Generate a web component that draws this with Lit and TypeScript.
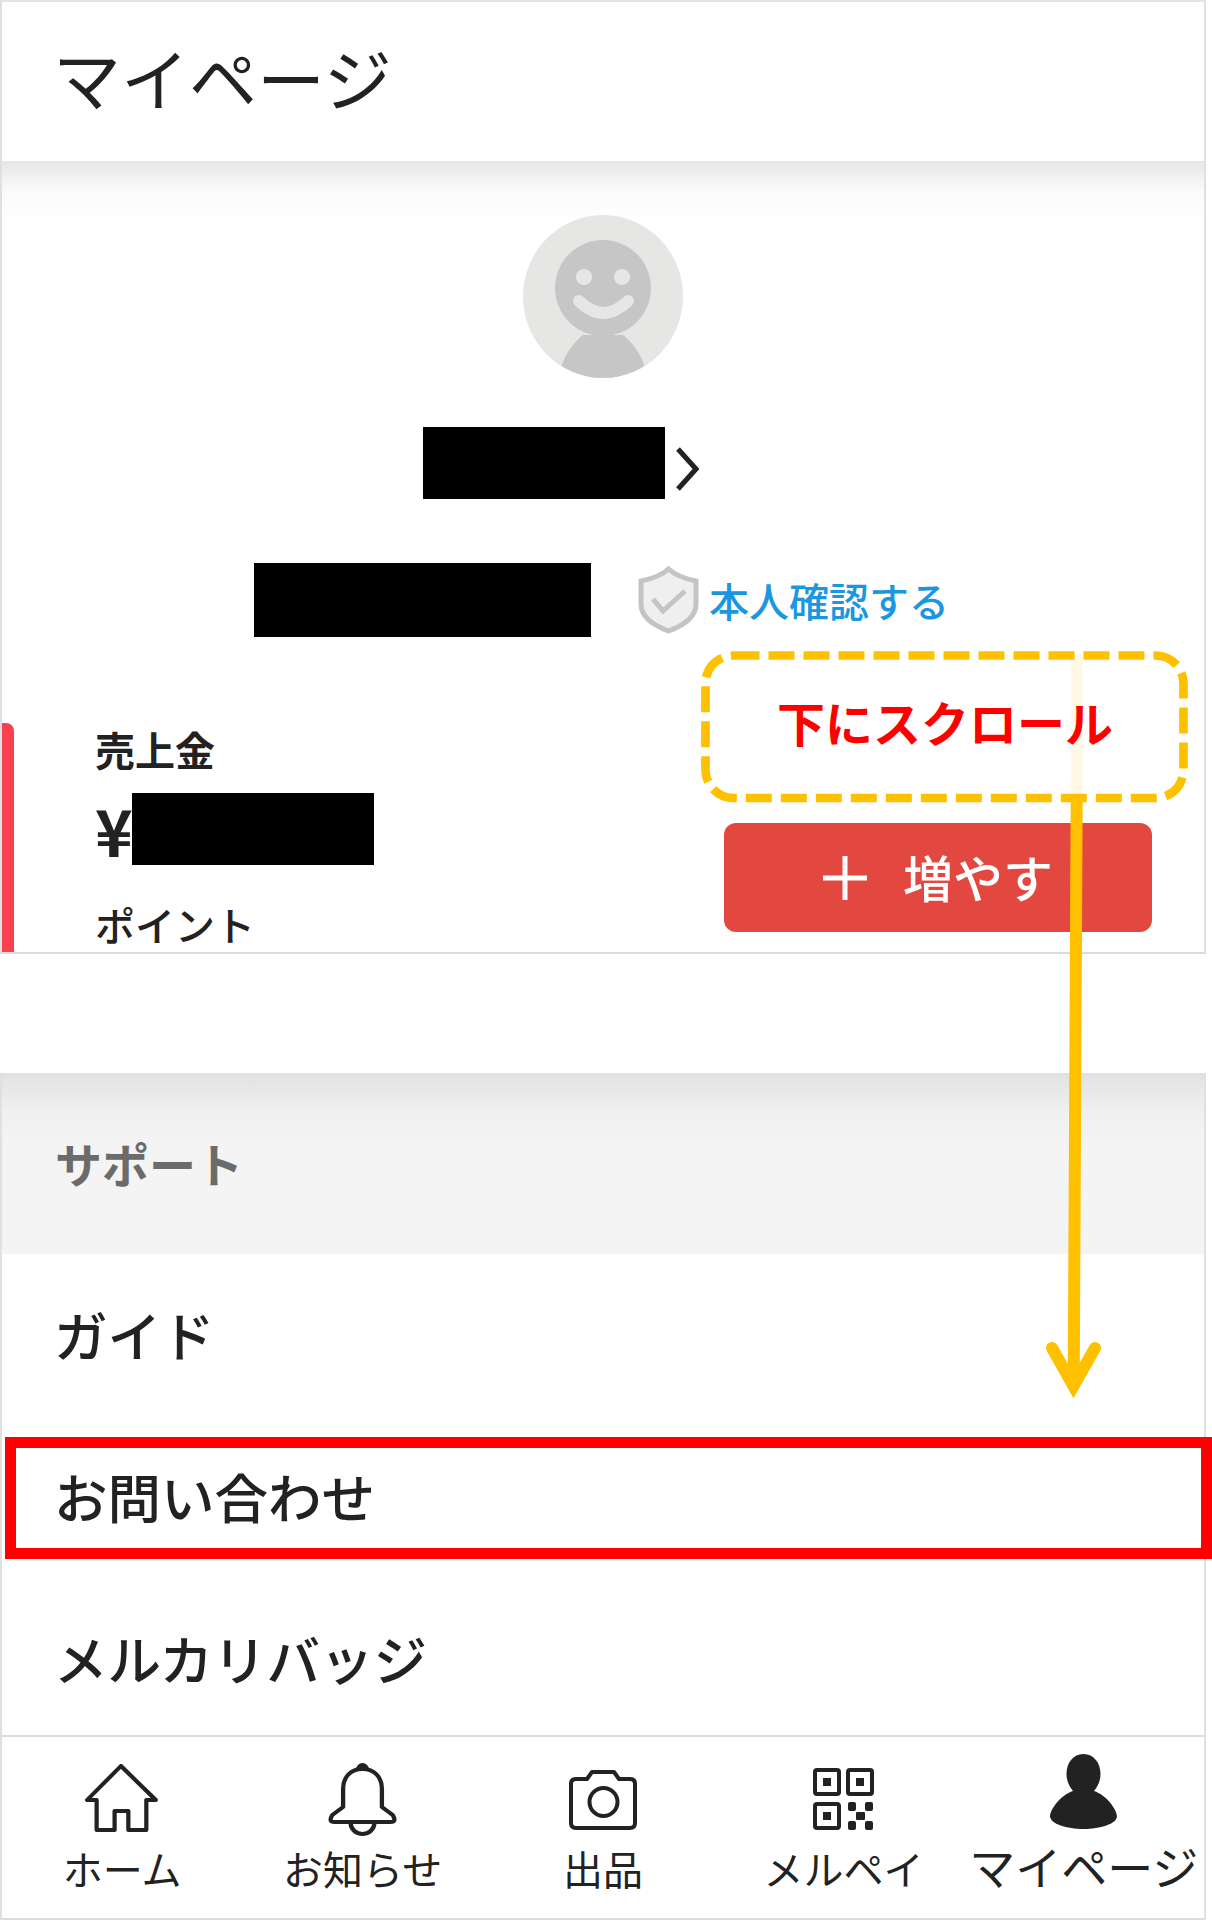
import { LitElement, html, css, svg } from "lit";
import { customElement } from "lit/decorators.js";

const navItems = [
  {
    label: "ホーム",
    icon: html`<svg class="ico" width="74" height="70" viewBox="0 0 70 70" preserveAspectRatio="none">
      <path d="M34 2 L2 36 H11 V66 H28 V47 H41 V66 H58 V36 H67 Z" />
    </svg>`,
  },
  {
    label: "お知らせ",
    icon: html`<svg class="ico" width="69" height="76" viewBox="0 0 64 76" preserveAspectRatio="none">
      <path d="M32 8 C21 8 14 16 14 28 V46 L4 54 Q0 61 6 61 H58 Q64 61 60 54 L50 46 V28 C50 16 43 8 32 8Z" />
      <path d="M21 62 A11 11 0 0 0 43 62" />
      <path class="fill" d="M25 10 Q27 2 32 2 Q37 2 39 10 Z" />
    </svg>`,
  },
  {
    label: "出品",
    icon: html`<svg class="ico" width="68" height="61" viewBox="0 0 68 61">
      <path d="M7 10 H18 L23 3 H45 L50 10 H61 Q66 10 66 15 V54 Q66 59 61 59 H7 Q2 59 2 54 V15 Q2 10 7 10Z" />
      <circle cx="34.5" cy="33" r="14" />
    </svg>`,
  },
  {
    label: "メルペイ",
    icon: html`<svg class="ico" width="61" height="62" viewBox="0 0 61 62">
      <rect x="2" y="2" width="24" height="24" rx="2" />
      <rect x="35" y="2" width="24" height="24" rx="2" />
      <rect x="2" y="36" width="24" height="24" rx="2" />
      <rect class="fill" x="10" y="10" width="8" height="8" />
      <rect class="fill" x="43" y="10" width="8" height="8" />
      <rect class="fill" x="10" y="44" width="8" height="8" />
      <rect class="fill" x="35" y="34" width="8" height="9" rx="2" />
      <rect class="fill" x="52" y="34" width="8" height="9" rx="2" />
      <rect class="fill" x="43" y="44" width="9" height="8" rx="1" />
      <rect class="fill" x="35" y="53" width="8" height="9" rx="2" />
      <rect class="fill" x="52" y="53" width="8" height="9" rx="2" />
    </svg>`,
  },
  {
    label: "マイページ",
    active: true,
    icon: html`<svg class="ico" width="67" height="75" viewBox="0 0 67 75">
      <path class="fill" d="M33.5 0 C44 0 50.5 9 50.5 20 C50.5 28 47 33 44 37 C56 41 66 54 67 62 C67 70 50 75 33.5 75 C17 75 0 70 0 62 C1 54 11 41 23 37 C20 33 16.5 28 16.5 20 C16.5 9 23 0 33.5 0Z" />
    </svg>`,
  },
];

const rows = ["ガイド", "お問い合わせ", "メルカリバッジ"];

@customElement("app-root")
export class AppRoot extends LitElement {
  static styles = css`
    :host {
      display: block;
      position: relative;
      width: 1212px;
      height: 1920px;
      overflow: hidden;
      background: #fff;
      color: #222;
      font-family: "Noto Sans CJK JP", "Noto Sans", sans-serif;
    }
    .panel {
      width: 1206px;
      box-sizing: border-box;
      border-left: 2px solid #e0e0e0;
      border-right: 2px solid #e0e0e0;
    }
    .top {
      height: 954px;
      border-top: 2px solid #e4e4e4;
      border-bottom: 2px solid #dcdcdc;
    }
    .title-bar {
      box-sizing: border-box;
      height: 159px;
      display: flex;
      align-items: center;
      padding: 0 0 10px 51px;
      font-size: 68px;
      line-height: 1;
      font-weight: 400;
    }
    .profile {
      display: flow-root;
      height: 791px;
      background: linear-gradient(#e6e6e6, #fafafa 50%, #fff) no-repeat 0 0 / 100% 60px;
    }
    .avatar {
      display: block;
      margin: 54px auto 0;
    }
    .redact {
      background: #000;
      flex: none;
    }
    .name-row {
      display: flex;
      align-items: center;
      gap: 10px;
      margin-top: 49px;
      padding-left: 421px;
    }
    .name-row .redact {
      width: 242px;
      height: 72px;
    }
    .chevron {
      margin-top: 12px;
    }
    .verify-row {
      display: flex;
      align-items: center;
      margin-top: 64px;
      padding-left: 252px;
    }
    .verify-row .redact {
      width: 337px;
      height: 74px;
      margin-right: 47px;
    }
    .verify-row svg {
      margin-right: 10px;
    }
    .verify-link {
      font-size: 40px;
      line-height: 1;
      font-weight: 500;
      color: #1a97e0;
      white-space: nowrap;
    }
    .sales {
      display: flex;
      height: 229px;
      margin-top: 86px;
    }
    .sales-bar {
      flex: none;
      width: 12px;
      border-top-right-radius: 8px;
      background: #f9404e;
    }
    .sales-left {
      flex: 1;
      padding-left: 81px;
    }
    .sales-label {
      margin-top: 2px;
      font-size: 40px;
      line-height: 48px;
      font-weight: 700;
    }
    .amount {
      display: flex;
      align-items: center;
      margin-top: 20px;
      height: 72px;
    }
    .yen {
      width: 37px;
      font-size: 64px;
      line-height: 1;
      font-weight: 700;
    }
    .amount .redact {
      width: 242px;
      height: 72px;
    }
    .points {
      margin-top: 34px;
      font-size: 40px;
      line-height: 50px;
      font-weight: 500;
    }
    .add-btn {
      display: flex;
      align-items: center;
      justify-content: center;
      gap: 36px;
      flex: none;
      box-sizing: border-box;
      width: 428px;
      height: 109px;
      margin: 100px 52px 0 0;
      border-radius: 12px;
      background: #e2483f;
      color: #fff;
      font-size: 50px;
      line-height: 1;
      font-weight: 500;
    }
    .add-btn span {
      margin-top: -4px;
    }
    .bottom {
      margin-top: 119px;
      border-top: 2px solid #e0e0e0;
    }
    .section-head {
      box-sizing: border-box;
      height: 179px;
      display: flex;
      align-items: center;
      padding: 0 0 4px 53px;
      background: linear-gradient(#e2e2e2, #f0f0f0 35px, #f4f4f4 70px);
      color: #6b6b6b;
      font-size: 47px;
      font-weight: 700;
      line-height: 1;
    }
    .rows {
      height: 481px;
      overflow: hidden;
    }
    .row {
      box-sizing: border-box;
      height: 162px;
      display: flex;
      align-items: center;
      padding: 0 0 3px 52px;
      font-size: 53.5px;
      line-height: 1;
      font-weight: 500;
    }
    .nav {
      box-sizing: border-box;
      height: 185px;
      display: grid;
      grid-template-columns: repeat(5, 1fr);
      border-top: 2px solid #dcdcdc;
      border-bottom: 2px solid #dcdcdc;
    }
    .nav-item {
      display: flex;
      flex-direction: column;
      align-items: center;
    }
    .nav-icon {
      height: 90px;
      margin-top: 17px;
      display: flex;
      align-items: center;
    }
    .nav-item.active .nav-icon {
      align-items: flex-start;
    }
    .ico {
      fill: none;
      stroke: #222;
      stroke-width: 4;
      stroke-linejoin: round;
    }
    .ico .fill {
      fill: #222;
      stroke: none;
    }
    .nav-label {
      margin-top: 2px;
      font-size: 40px;
      line-height: 44px;
      white-space: nowrap;
    }
    .nav-item.active .nav-label {
      font-size: 46px;
      margin-top: -1px;
    }
    .callout {
      position: absolute;
      left: 703px;
      top: 652px;
      width: 484px;
      height: 138px;
      display: flex;
      align-items: center;
      justify-content: center;
      color: #ff0000;
      font-size: 48px;
      line-height: 1;
      font-weight: 700;
      white-space: nowrap;
    }
    .marks {
      position: absolute;
      left: 0;
      top: 0;
      pointer-events: none;
    }
    .highlight {
      position: absolute;
      left: 5px;
      top: 1437px;
      box-sizing: border-box;
      width: 1207px;
      height: 122px;
      border: 11px solid #ff0000;
    }
  `;

  render() {
    return html`
      <div class="panel top">
        <div class="title-bar">マイページ</div>
        <div class="profile">
          <svg class="avatar" width="160" height="163" viewBox="0 0 160 163">
            <defs>
              <clipPath id="av"><ellipse cx="80" cy="81.5" rx="80" ry="81.5" /></clipPath>
            </defs>
            <ellipse cx="80" cy="81.5" rx="80" ry="81.5" fill="#e6e6e5" />
            <g clip-path="url(#av)" fill="#c6c6c6">
              <circle cx="80" cy="73" r="48" />
              <path d="M60 120 C50 128 43 138 38 152 L40 170 H122 L122 152 C117 138 110 128 100 120 Z" />
            </g>
            <circle cx="61" cy="62" r="8" fill="#e6e6e5" />
            <circle cx="99" cy="62" r="8" fill="#e6e6e5" />
            <path d="M56 86 Q80 110 105 86" fill="none" stroke="#e6e6e5" stroke-width="12" stroke-linecap="round" />
          </svg>
          <div class="name-row">
            <div class="redact"></div>
            <svg class="chevron" width="24" height="44" viewBox="0 0 24 44">
              <path d="M3 2 L21 22 L3 42" fill="none" stroke="#222" stroke-width="5" />
            </svg>
          </div>
          <div class="verify-row">
            <div class="redact"></div>
            <svg width="61" height="68" viewBox="0 0 61 68">
              <path d="M30.5 3 C38 10 48 13 58 15 V38 C58 52 44 60 30.5 65 C17 60 3 52 3 38 V15 C13 13 23 10 30.5 3Z" fill="#efefef" stroke="#c4c4c4" stroke-width="5" />
              <path d="M15 33 L25 45 L47 25" fill="none" stroke="#c4c4c4" stroke-width="5" />
            </svg>
            <span class="verify-link">本人確認する</span>
          </div>
          <div class="sales">
            <div class="sales-bar"></div>
            <div class="sales-left">
              <div class="sales-label">売上金</div>
              <div class="amount">
                <span class="yen">¥</span>
                <div class="redact"></div>
              </div>
              <div class="points">ポイント</div>
            </div>
            <div class="add-btn">
              <svg width="44" height="44" viewBox="0 0 44 44">
                <path d="M0 22 H44 M22 0 V44" stroke="#fff" stroke-width="5" />
              </svg>
              <span>増やす</span>
            </div>
          </div>
        </div>
      </div>

      <div class="panel bottom">
        <div class="section-head">サポート</div>
        <div class="rows">
          ${rows.map((r) => html`<div class="row">${r}</div>`)}
        </div>
        <div class="nav">
          ${navItems.map(
            (n) => html`
              <div class="nav-item ${n.active ? "active" : ""}">
                <div class="nav-icon">${n.icon}</div>
                <div class="nav-label">${n.label}</div>
              </div>
            `
          )}
        </div>
      </div>

      <!-- annotations drawn over the screenshot -->
      <svg class="marks" width="1212" height="1920" viewBox="0 0 1212 1920">
        ${svg`
          <rect x="1071" y="655" width="12" height="142" fill="#fff8e6" />
          <rect x="705.5" y="655.5" width="478" height="142.5" rx="28" fill="none" stroke="#ffc000" stroke-width="8.7" stroke-dasharray="26 9" />
          <path d="M1076.7 796 L1073.7 1385" stroke="#ffc000" stroke-width="12" fill="none" />
          <path d="M1052 1348 L1073.5 1386 L1095 1348" stroke="#ffc000" stroke-width="12" stroke-linecap="round" fill="none" />
        `}
      </svg>
      <div class="callout">下にスクロール</div>
      <div class="highlight"></div>
    `;
  }
}
